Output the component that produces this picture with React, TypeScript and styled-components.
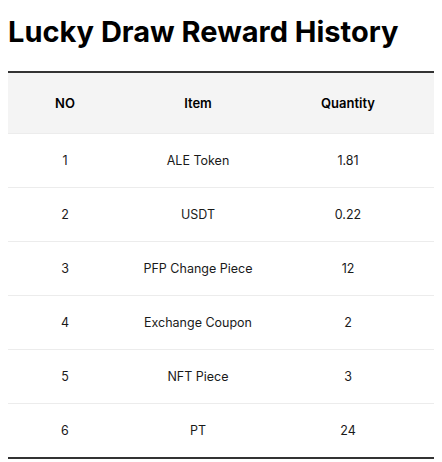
import styled, { createGlobalStyle } from 'styled-components'

const GlobalStyle = createGlobalStyle`
  body {
    margin: 8px;
    font-family: Inter, "Noto Sans", sans-serif;
    color: #111;
    background: #fff;
    overflow: hidden;
  }
`

const Page = styled.div`
  width: 434px;
  overflow: hidden;
`

const Title = styled.h1`
  font-size: 29px;
  font-weight: 700;
  margin: 7px 0 21px;
  line-height: 1.2;
  color: #000;
  white-space: nowrap;
`

const Table = styled.table`
  border-collapse: collapse;
  width: 620px;
  table-layout: fixed;
  border-top: 2px solid #333;
  border-bottom: 2px solid #333;
`

const HeadRow = styled.tr`
  background: #f4f4f4;
  height: 62px;
`

const Th = styled.th<{ $w: number }>`
  width: ${(p) => p.$w}px;
  font-size: 13px;
  font-weight: 600;
  text-align: center;
  color: #000;
  padding: 0;
`

const Row = styled.tr`
  height: 54px;
  border-top: 1px solid #ececec;
`

const Td = styled.td`
  font-size: 12.5px;
  text-align: center;
  color: #1a1a1a;
  padding: 0;
`

const rewards = [
  { no: 1, item: 'ALE Token', qty: '1.81', time: '2024-05-12 14:32' },
  { no: 2, item: 'USDT', qty: '0.22', time: '2024-05-12 14:31' },
  { no: 3, item: 'PFP Change Piece', qty: '12', time: '2024-05-11 09:18' },
  { no: 4, item: 'Exchange Coupon', qty: '2', time: '2024-05-10 21:05' },
  { no: 5, item: 'NFT Piece', qty: '3', time: '2024-05-10 20:44' },
  { no: 6, item: 'PT', qty: '24', time: '2024-05-09 18:27' },
]

const App = () => {
  return (
    <Page>
      <GlobalStyle />
      <Title>Lucky Draw Reward History</Title>
      <Table>
        <thead>
          <HeadRow>
            <Th $w={114}>NO</Th>
            <Th $w={152}>Item</Th>
            <Th $w={148}>Quantity</Th>
            <Th $w={206}>Time</Th>
          </HeadRow>
        </thead>
        <tbody>
          {rewards.map((r) => (
            <Row key={r.no}>
              <Td>{r.no}</Td>
              <Td>{r.item}</Td>
              <Td>{r.qty}</Td>
              <Td>{r.time}</Td>
            </Row>
          ))}
        </tbody>
      </Table>
    </Page>
  )
}

export default App
